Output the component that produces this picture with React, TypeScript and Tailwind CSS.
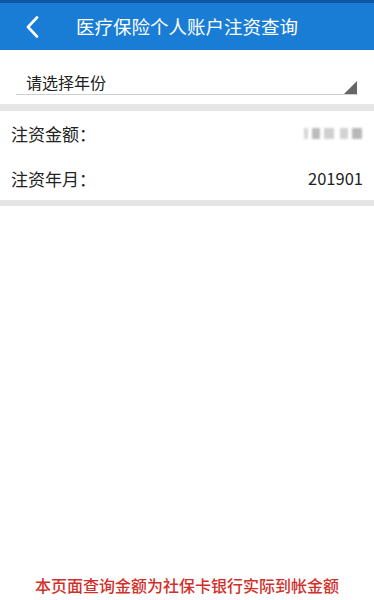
const font = { fontFamily: '"Noto Sans CJK SC", "Noto Sans", sans-serif' };

export default function App() {
  return (
    <div className="flex h-[600px] flex-col bg-white" style={font}>
      <div className="h-[3px] bg-[#0f56a8]" />
      <header className="flex h-[47px] items-center bg-[#1a7dd5] text-white">
        <svg className="ml-[25px] h-[22px] w-[14px]" viewBox="0 0 14 22" fill="none">
          <path d="M12 1.5 L3 11 L12 20.5" stroke="white" strokeWidth="2.6" strokeLinecap="round" strokeLinejoin="round" />
        </svg>
        <h1 className="ml-[37px] text-[18.5px] leading-none">医疗保险个人账户注资查询</h1>
      </header>

      <div className="px-4 pt-[19px]">
        <div className="relative flex h-[26px] items-center border-b border-[#cfcfcf] pl-[10px]">
          <span className="text-[16px] text-[#222]">请选择年份</span>
          <div className="absolute bottom-0 right-[1px] h-0 w-0 border-b-[13px] border-l-[13px] border-b-[#666] border-l-transparent" />
        </div>
      </div>

      <div className="mt-[9px] h-[7px] bg-[#e6e6e6]" />

      <div className="flex flex-col px-[11px]">
        <div className="flex h-[45px] items-center justify-between">
          <span className="text-[17px] text-[#222]">注资金额：</span>
          <div className="mr-[1px] flex items-center gap-[4px] blur-[0.8px]">
            <div className="h-[11px] w-[4px] bg-[#d6d6d6]" />
            <div className="h-[11px] w-[8px] bg-[#bcbcbc]" />
            <div className="h-[11px] w-[10px] bg-[#cfcfcf]" />
            <div className="ml-[2px] h-[11px] w-[8px] bg-[#d2d2d2]" />
            <div className="h-[11px] w-[10px] bg-[#b8b8b8]" />
          </div>
        </div>
        <div className="flex h-[45px] items-center justify-between">
          <span className="text-[17px] text-[#222]">注资年月：</span>
          <span className="text-[16.5px] text-[#222]">201901</span>
        </div>
      </div>

      <div className="mt-[-1px] h-[6px] bg-[#e6e6e6]" />

      <div className="mt-auto pb-[3px] text-center">
        <p className="text-[16px] font-medium text-[#d22f2a]">本页面查询金额为社保卡银行实际到帐金额</p>
      </div>
    </div>
  );
}
